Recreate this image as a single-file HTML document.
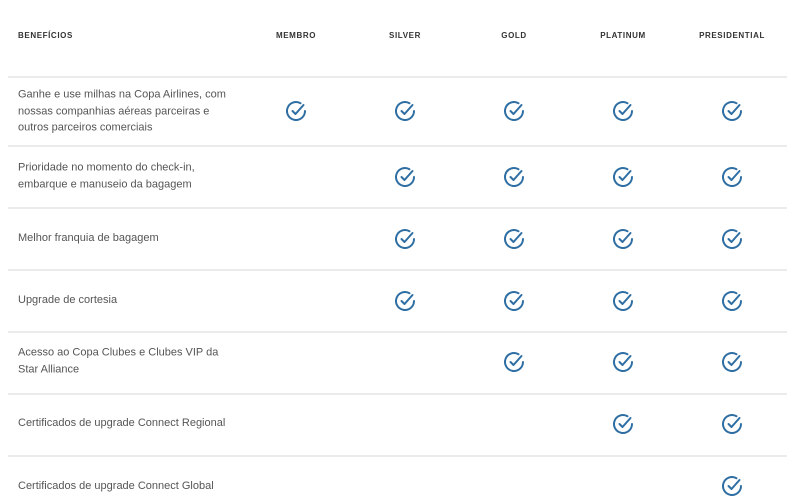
<!DOCTYPE html>
<html><head><meta charset="utf-8"><style>
body{margin:0;width:807px;height:499px;background:#fff;font-family:"Liberation Sans",sans-serif;position:relative;overflow:hidden}
.h{position:absolute;top:31px;font-size:8px;font-weight:bold;color:#333;letter-spacing:.6px;transform:translateX(-50%)}
.l{position:absolute;left:8px;width:779px;height:2px;background:#ebebeb}
.t{position:absolute;left:18px;font-size:11px;line-height:16.5px;color:#555;transform:translateY(-50%)}
svg{position:absolute;width:22px;height:22px;margin:-11px 0 0 -11px}
</style></head><body>
<div class="h" style="left:0;transform:none;left:18px">BENEFÍCIOS</div>
<div class="h" style="left:296px">MEMBRO</div>
<div class="h" style="left:405px">SILVER</div>
<div class="h" style="left:514px">GOLD</div>
<div class="h" style="left:623px">PLATINUM</div>
<div class="h" style="left:732px">PRESIDENTIAL</div>
<div class="l" style="top:76px"></div>
<div class="l" style="top:145px"></div>
<div class="l" style="top:207px"></div>
<div class="l" style="top:269px"></div>
<div class="l" style="top:331px"></div>
<div class="l" style="top:393px"></div>
<div class="l" style="top:455px"></div>
<div class="t" style="top:111px">Ganhe e use milhas na Copa Airlines, com<br>nossas companhias aéreas parceiras e<br>outros parceiros comerciais</div>
<div class="t" style="top:176px">Prioridade no momento do check-in,<br>embarque e manuseio da bagagem</div>
<div class="t" style="top:238px">Melhor franquia de bagagem</div>
<div class="t" style="top:300px">Upgrade de cortesia</div>
<div class="t" style="top:361px">Acesso ao Copa Clubes e Clubes VIP da<br>Star Alliance</div>
<div class="t" style="top:423px">Certificados de upgrade Connect Regional</div>
<div class="t" style="top:486px">Certificados de upgrade Connect Global</div>
<svg style="display:none"><defs><g id="c" fill="none" stroke="#2e6ea3" stroke-width="2" stroke-linecap="round" stroke-linejoin="round"><path d="M20 11A9 9 0 1 1 15.5 3.2"/><path d="M7.5 11L10.5 14L18.5 5"/></g></defs></svg>
<svg style="left:296px;top:111px"><use href="#c"/></svg>
<svg style="left:405px;top:111px"><use href="#c"/></svg>
<svg style="left:514px;top:111px"><use href="#c"/></svg>
<svg style="left:623px;top:111px"><use href="#c"/></svg>
<svg style="left:732px;top:111px"><use href="#c"/></svg>
<svg style="left:405px;top:177px"><use href="#c"/></svg>
<svg style="left:514px;top:177px"><use href="#c"/></svg>
<svg style="left:623px;top:177px"><use href="#c"/></svg>
<svg style="left:732px;top:177px"><use href="#c"/></svg>
<svg style="left:405px;top:239px"><use href="#c"/></svg>
<svg style="left:514px;top:239px"><use href="#c"/></svg>
<svg style="left:623px;top:239px"><use href="#c"/></svg>
<svg style="left:732px;top:239px"><use href="#c"/></svg>
<svg style="left:405px;top:301px"><use href="#c"/></svg>
<svg style="left:514px;top:301px"><use href="#c"/></svg>
<svg style="left:623px;top:301px"><use href="#c"/></svg>
<svg style="left:732px;top:301px"><use href="#c"/></svg>
<svg style="left:514px;top:362px"><use href="#c"/></svg>
<svg style="left:623px;top:362px"><use href="#c"/></svg>
<svg style="left:732px;top:362px"><use href="#c"/></svg>
<svg style="left:623px;top:424px"><use href="#c"/></svg>
<svg style="left:732px;top:424px"><use href="#c"/></svg>
<svg style="left:732px;top:486px"><use href="#c"/></svg>
</body></html>
